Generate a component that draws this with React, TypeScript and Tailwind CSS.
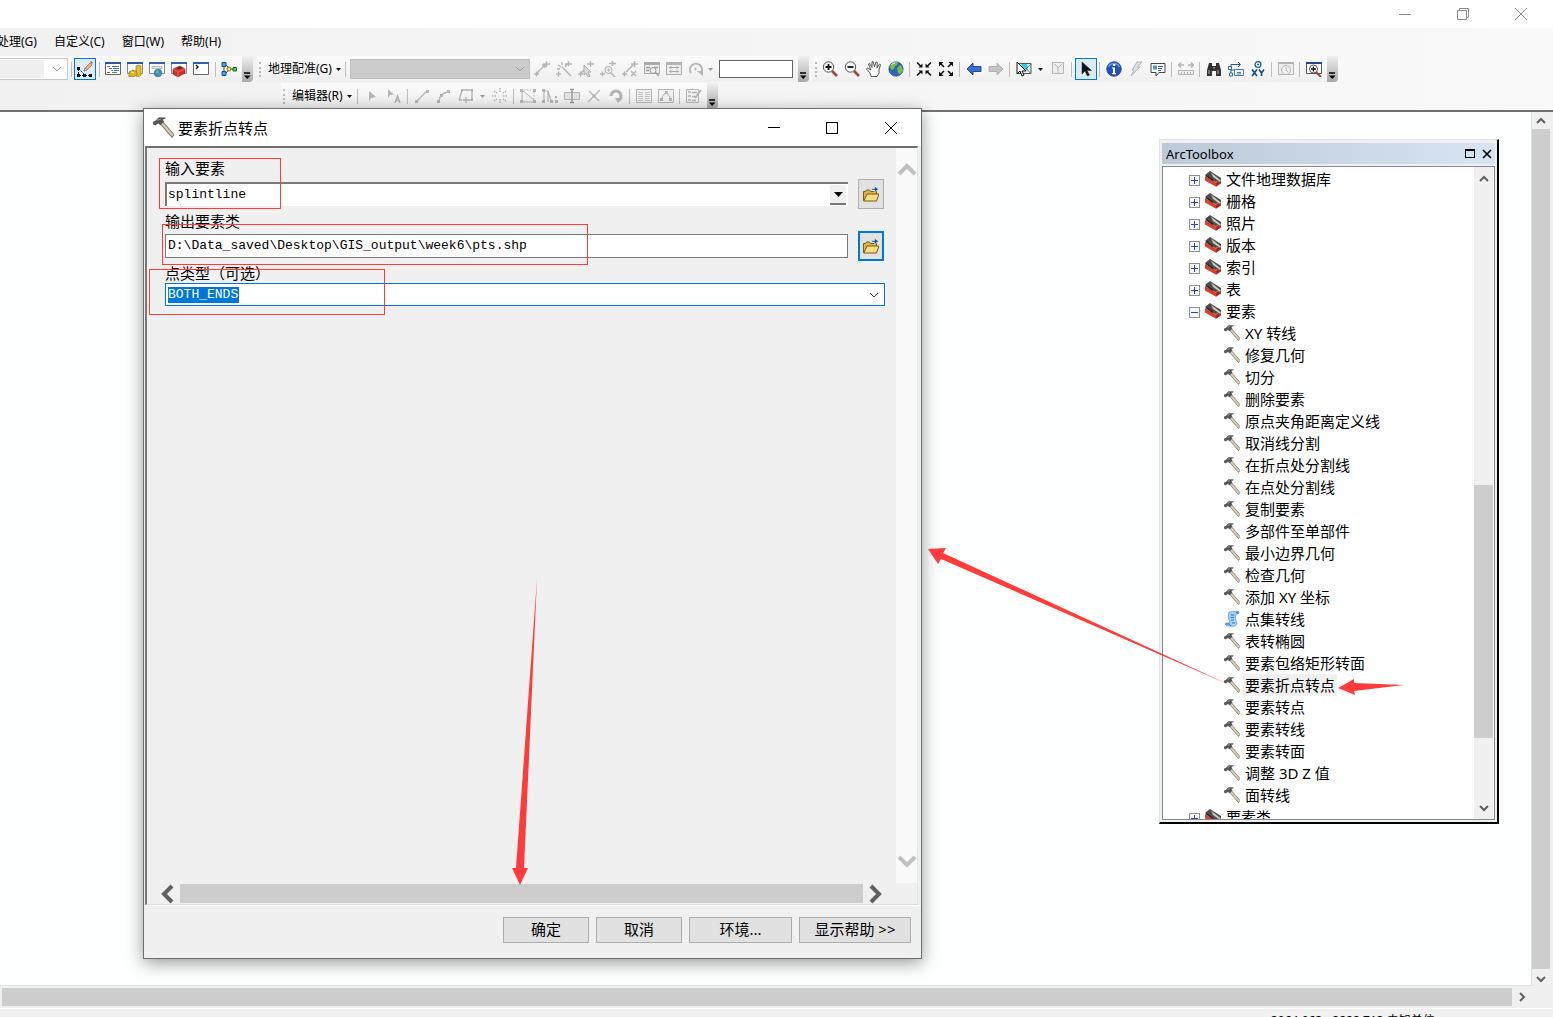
import { useState } from 'react';
import type { ReactNode } from 'react';
import clsx from 'clsx';

const G = '#b4b4b4';

// 16x16 toolbar drawings
const ICONS: Record<string, ReactNode> = {
  edit: (
    <>
      <path d="M1.500 8v6M2 14.500h12M2 8l5 5" stroke="#222" fill="none" strokeDasharray="2 1" />
      <path d="M0 6h3v3H0zM0 13h3v3H0zM6 13h3v3H6zM12 13h3v3h-3z" fill="#111" />
      <path d="M7 10l1-3 5-5 2 2-5 5z" fill="#f0b070" stroke="#8a5a30" strokeWidth=".6" />
      <path d="M13 1l1-1 2 2-1 1z" fill="#d0505a" />
      <path d="M7 10l1-3 2 2z" fill="#fff" stroke="#555" strokeWidth=".5" />
    </>
  ),
  toc: (
    <>
      <path d="M.5 1.500h15v12H.5z" fill="#fff" stroke="#666" />
      <path d="M0 1h16v2H0z" fill="#2f55a5" />
      <path d="M2 5.500h3M7 5.500h7M8 7.500h6M9 9.500h5" stroke="#3a7fd0" />
      <path d="M4 7.500h3M2 11.500h3" stroke="#d04040" />
      <path d="M6 9.500h2M7 11.500h5" stroke="#3aa060" />
    </>
  ),
  catalog: (
    <>
      <path d="M.5 1.500h15v11H.5z" fill="#fff" stroke="#888" />
      <path d="M0 1h16v2H0z" fill="#2f55a5" />
      <path d="M9 5l3-1 2 1v9l-3 2-2-1z" fill="#e2bf2b" stroke="#8f7612" strokeWidth=".7" />
      <path d="M2 11l4-2 4 2v3l-4 2H2z" fill="#d9b523" stroke="#8f7612" strokeWidth=".7" />
      <path d="M4 11l3 1" stroke="#fff3a0" />
    </>
  ),
  search: (
    <>
      <path d="M.5 1.500h15v11H.5z" fill="#fff" stroke="#888" />
      <path d="M0 1h16v2H0z" fill="#3560ad" />
      <path d="M3 5.500h10v2H3z" fill="#dde6f0" stroke="#9aa8b8" strokeWidth=".7" />
      <circle cx="9" cy="12" r="3.800" fill="#3d86d6" stroke="#27598f" strokeWidth=".6" />
      <path d="M7 10l2-1 1 2-1 2-2-1zM10 13l2-1-1 3z" fill="#72bf4a" />
    </>
  ),
  toolbox: (
    <>
      <path d="M.5 1.500h15v11H.5z" fill="#fff" stroke="#888" />
      <path d="M0 1h16v2H0z" fill="#3560ad" />
      <path d="M2 8l7-3 5 3v4l-7 4-5-3z" fill="#c8342c" stroke="#7d1a16" strokeWidth=".6" />
      <path d="M2 8l5 3 7-3M7 11v5" stroke="#ef8278" strokeWidth=".7" fill="none" />
      <path d="M6 7l3-1 2 1-3 1z" fill="#551512" />
    </>
  ),
  python: (
    <>
      <path d="M.5 1.500h15v12H.5z" fill="#fff" stroke="#666" />
      <path d="M0 1h16v2H0z" fill="#3560ad" />
      <path d="M3 4l2 2-2 2" stroke="#111" fill="none" strokeWidth="1.300" />
    </>
  ),
  model: (
    <>
      <path d="M3 3v10M5 4l3 3M5 12l3-3M9 8h3" stroke="#444" fill="none" />
      <path d="M1 1.500h4v4H1zM1 10.500h4v4H1z" fill="#4f9fe8" stroke="#15558f" />
      <circle cx="8" cy="8" r="2" fill="#ffe650" stroke="#8a7410" />
      <path d="M12 6.500h3.500v3.500H12z" fill="#58c06a" stroke="#1a7030" />
    </>
  ),
  ctrlPoint: <path d="M0 13h5M2.500 10.500v5M3 12l9-9M9 3h7M12.500 0v6M11 7V4H8" stroke={G} fill="none" strokeWidth="1.300" />,
  wand: <path d="M0 13h5M2.500 10.500v5M6 6l9 9M9 3h7M12.500 0v5M2 4l3 2M6 1v3M1 8h3M9 6l2-3" stroke={G} fill="none" strokeWidth="1.400" />,
  pick: (
    <>
      <path d="M0 13h5M2.500 10.500v5M9 3h7M12.500 0v6M3 12l3-3" stroke={G} fill="none" strokeWidth="1.300" />
      <path d="M6 4v10l2-2 2 4 2-1-2-4h3z" fill="#ddd" stroke="#aaa" />
    </>
  ),
  zoomPt: (
    <>
      <path d="M0 13h5M2.500 10.500v5M9 2.500h7M12.500 0v5M11 12l4 4" stroke={G} fill="none" strokeWidth="1.400" />
      <circle cx="8.500" cy="9" r="3.500" fill="#f3f3f3" stroke="#aaa" />
      <path d="M7 9h3M8.500 7.500v3" stroke="#aaa" />
    </>
  ),
  delPt: <path d="M0 13h5M2.500 10.500v5M4 11l7-7M9 3h7M12.500 0v6M9 10l5 5M14 10l-5 5" stroke={G} fill="none" strokeWidth="1.500" />,
  winZoom: (
    <>
      <path d="M.5 1.500h15v11H.5z" fill="#eee" stroke="#aaa" />
      <path d="M0 1h16v3H0z" fill="#aaa" />
      <path d="M2 6.500h4M10 6.500h4M2 9.500h3M11 11l4 4" stroke="#999" strokeWidth="1.400" />
      <circle cx="9" cy="9.500" r="3" fill="#eee" stroke="#999" />
    </>
  ),
  winTable: (
    <>
      <path d="M.5 1.500h15v12H.5z" fill="#eee" stroke="#aaa" />
      <path d="M0 1h16v3H0z" fill="#b4b4b4" />
      <path d="M3 6.500h10M3 10.500h10M5 5v3M11 5v3M5 9v3M11 9v3" stroke="#aaa" />
    </>
  ),
  rotate: (
    <>
      <path d="M3 12A6 6 0 1 1 13 12" stroke={G} fill="none" strokeWidth="2" />
      <path d="M9 10h6v5z" fill={G} />
      <path d="M6 8h3M7.500 6.500v3" stroke={G} />
    </>
  ),
  zoomIn: (
    <>
      <path d="M10 10l5 5" stroke="#9b4a3c" strokeWidth="2.600" />
      <circle cx="6.500" cy="6" r="5.200" fill="#f4f6f8" stroke="#555" />
      <path d="M3.500 6h6M6.500 3v6" stroke="#111" strokeWidth="1.800" />
    </>
  ),
  zoomOut: (
    <>
      <path d="M10 10l5 5" stroke="#9b4a3c" strokeWidth="2.600" />
      <circle cx="6.500" cy="6" r="5.200" fill="#f4f6f8" stroke="#555" />
      <path d="M3.500 6h6" stroke="#111" strokeWidth="1.800" />
    </>
  ),
  pan: <path d="M5 15.500L4 12 .5 8l1-1L5 9 2.500 3l1-.8L6 6.500 6 .8h1.300L8.500 6l1.500-5 1.200.3L11 7l2.500-4 1 .6L13 9v3l-2 3.500z" fill="#fff" stroke="#444" strokeWidth=".9" />,
  globe: (
    <>
      <circle cx="8" cy="8" r="7.200" fill="#2c66b4" stroke="#1d3f70" strokeWidth=".6" />
      <path d="M2 5l4-4 4 0-1 3-2 1-1 3-3 1zM9 7l3-3 2 2 1 4-3 3-2-1z" fill="#7dbb4c" />
      <path d="M3 4a6 6 0 0 1 4-2" stroke="#d5e9ff" fill="none" />
    </>
  ),
  shrink: (
    <>
      <path d="M1 1.500l4 4M15 1.500l-4 4M1 14.500l4-4M15 14.500l-4-4" stroke="#111" strokeWidth="1.600" />
      <path d="M6.500 2.500v4H2.500zM9.500 2.500v4h4zM6.500 13.500v-4h-4zM9.500 13.500v-4h4z" fill="#111" />
    </>
  ),
  expand: (
    <>
      <path d="M2 2l4 4M14 2l-4 4M2 14l4-4M14 14l-4-4" stroke="#111" strokeWidth="1.600" />
      <path d="M1 1h4.500L1 5.500zM15 1h-4.500L15 5.500zM1 15h4.500L1 10.500zM15 15h-4.500l4.500-4.500z" fill="#111" />
    </>
  ),
  back: <path d="M1 8l6-6v3.500h8v5H7V14z" fill="#3a6fd0" stroke="#1c3f8c" strokeWidth=".9" />,
  forward: <path d="M15 8L9 2v3.500H1v5h8V14z" fill="#c4c4c4" stroke="#adadad" strokeWidth=".9" />,
  selectFeat: (
    <>
      <path d="M2 2.500h13v10H2z" fill="#eaf6fa" stroke="#555" />
      <path d="M5 3h6l1 4-1 3-5-4z" fill="#30cbe8" />
      <path d="M10 7l4 5M11 7l4-4" stroke="#555" strokeWidth=".8" />
      <path d="M1 1v12l3-3 2 5 2-1-2-4h4z" fill="#fff" stroke="#111" />
    </>
  ),
  clearSel: (
    <>
      <path d="M2.500 1.500h11v11h-11z" fill="#eee" stroke={G} />
      <path d="M5 3l3 4 4-4M8 7v5" stroke={G} fill="none" />
    </>
  ),
  arrow: <path d="M4 1v12l3-3 2.500 5 2-1L9 9.500h4.500z" fill="#111" stroke="#333" strokeWidth=".6" />,
  info: (
    <>
      <circle cx="8" cy="8" r="7.300" fill="#2054b4" stroke="#173a78" strokeWidth=".7" />
      <path d="M2.500 6a6 6 0 0 1 11 0" stroke="#6e9cea" fill="none" strokeWidth="1.500" />
      <path d="M7 3h2.300v2H7zM6 6.500h3V12h1v1.200H6V12h1V7.500H6z" fill="#fff" />
    </>
  ),
  bolt: <path d="M9 1h5L9.500 6H12L3 15l3-6H4z" fill="#ddd" stroke={G} />,
  popup: (
    <>
      <path d="M1 2.500h14v9H9L6 15v-3.500H1z" fill="#fff" stroke="#444" />
      <path d="M3 4.500h4v4H3z" fill="#4a91d8" />
      <path d="M8 5.500h5M8 7.500h4M8 9.500h3" stroke="#2b6cb3" />
    </>
  ),
  measure: (
    <>
      <path d="M0 4h6M10 4h6M3 1.500L.5 4 3 6.500M13 1.500L15.500 4 13 6.500" stroke={G} fill="none" strokeWidth="1.500" />
      <path d="M.5 9.500h15v4H.5z" fill="#ececec" stroke={G} />
      <path d="M3.500 11v3M6.500 11v3M9.500 11v3M12.500 11v3" stroke={G} />
    </>
  ),
  find: (
    <>
      <path d="M3 2h3v3h4V2h3l2 7v6h-5v-5H6v5H1V9z" fill="#333" />
      <path d="M3 9v4M12 9v4M8 6v2" stroke="#999" strokeWidth="1.200" />
    </>
  ),
  route: (
    <>
      <path d="M3 7V3.500h9M10 1l2.500 2.500L10 6M3 7v5M3 9h4" stroke="#20588c" fill="none" />
      <path d="M.5 5.500h3v3h-3zM1.500 12h3v3h-3z" fill="#fff" stroke="#2a6ba6" />
      <path d="M6.500 8.500h9v6h-9z" fill="#eef5fb" stroke="#4c7ba6" />
      <path d="M9 11.500h4M9 13h4" stroke="#4c7ba6" />
    </>
  ),
  goXY: (
    <>
      <circle cx="8" cy="3.500" r="2.900" fill="#fff" stroke="#1c6298" strokeWidth="1.300" />
      <circle cx="8" cy="3.500" r="1" fill="#1c6298" />
      <path d="M2 8.500l5 6.500M7 8.500L2 15M9 8.500l2.500 3.500L14 8.500M11.500 12v3" stroke="#144f80" fill="none" strokeWidth="1.600" />
    </>
  ),
  time: (
    <>
      <path d="M.5 1.500h15v12H.5z" fill="#eee" stroke={G} />
      <path d="M0 1h16v2H0z" fill={G} />
      <circle cx="8" cy="9" r="4.500" fill="#f2f2f2" stroke={G} />
      <path d="M8 6v3l2 2" stroke={G} fill="none" />
    </>
  ),
  viewer: (
    <>
      <path d="M.5 1.500h15v11H.5z" fill="#fff" stroke="#555" />
      <path d="M0 1h16v2H0z" fill="#24468c" />
      <path d="M10 11l5 5" stroke="#9b4a3c" strokeWidth="2.200" />
      <circle cx="7.500" cy="8" r="4" fill="#fff" stroke="#555" />
      <path d="M5 8h5M7.500 5.500v5" stroke="#111" strokeWidth="1.400" />
    </>
  ),
  play: <path d="M5 3v10l2-3 5-1z" fill={G} />,
  playA: (
    <>
      <path d="M2 1v9l2-3h4z" fill={G} />
      <path d="M9 15l2.500-7L14 15M10 12.500h3" stroke={G} fill="none" strokeWidth="1.500" />
    </>
  ),
  segment: (
    <>
      <path d="M3 13L13 3" stroke={G} strokeWidth="1.300" />
      <path d="M1 12h3v3H1zM12 2h3v3h-3z" fill={G} />
    </>
  ),
  arc: (
    <>
      <path d="M3 13Q4 5 12 4" stroke={G} fill="none" strokeWidth="1.300" />
      <path d="M1 12h3v3H1zM4 6h3v3H4zM11 2h3v3h-3z" fill={G} />
    </>
  ),
  trace: (
    <>
      <path d="M1 12L4 2h10v10h-3M1 12h3M5 12h6M8 9v6" stroke={G} fill="none" strokeWidth="1.300" />
      <path d="M3 1h2v3H3zM13 1h2v3h-2zM13 10h2v3h-2z" fill={G} />
    </>
  ),
  burst: <path d="M8 0v5M8 11v5M0 8h5M11 8h5M2 3l3 2M14 3l-3 2M2 13l3-2M14 13l-3-2" stroke={G} strokeWidth="1.600" strokeDasharray="1.500 1" />,
  vertices: (
    <>
      <path d="M2 2v12h12M2 2l12 10" stroke={G} fill="none" />
      <path d="M4 2h10v9" stroke={G} fill="none" strokeDasharray="1.500 1.500" />
      <path d="M0 1h3v3H0zM13 1h3v3h-3zM0 12h3v3H0zM13 12h3v3h-3z" fill={G} />
    </>
  ),
  reshape: (
    <>
      <path d="M2 2v12M3 3h3l3 10M6 3v11" stroke={G} fill="none" strokeWidth="1.200" />
      <path d="M0 1h3v3H0zM0 12h3v3H0zM8 12h3v3H8zM13 8h2v2h-2zM13 12h3v3h-3z" fill={G} />
    </>
  ),
  cut: (
    <>
      <path d="M.5 4.500h15v7H.5z" fill="#e4e4e4" stroke={G} />
      <path d="M8 1v14M6 1.500h4M6 14.500h4" stroke="#999" strokeWidth="1.400" />
    </>
  ),
  split: (
    <>
      <path d="M2 14L14 2M3 3l10 10" stroke={G} strokeWidth="1.100" />
      <path d="M6.500 6.500h3v3h-3z" fill={G} />
    </>
  ),
  undoRotate: (
    <>
      <path d="M3 8a5 5 0 1 1 8 4" stroke={G} fill="none" strokeWidth="3" />
      <path d="M7 10h8l-5 5z" fill={G} />
    </>
  ),
  attrs: (
    <>
      <path d="M.5 1.500h15v13H.5z" fill="#f2f2f2" stroke={G} />
      <path d="M2 4.500h5M9 4.500h5M2 6.500h5M9 6.500h5M2 8.500h5M9 8.500h5M2 10.500h5M9 10.500h5M2 12.500h5M9 12.500h5" stroke="#c4c4c4" />
    </>
  ),
  sketch: (
    <>
      <path d="M.5 1.500h15v13H.5z" fill="#f2f2f2" stroke={G} />
      <path d="M4 12V9l4-5 4 5v3" stroke={G} fill="none" />
      <path d="M7 3h3v3H7zM2 10h3v3H2zM11 10h3v3h-3z" fill={G} />
    </>
  ),
  create: (
    <>
      <path d="M.5 1.500h12v13H.5z" fill="#f2f2f2" stroke={G} />
      <path d="M2 4h3M2 8h3M2 12h3M6 4.500h5M6 8.500h3M6 12.500h4" stroke={G} strokeWidth="1.500" />
      <path d="M9 10l6-8" stroke={G} strokeWidth="2" />
    </>
  ),
};

function Icon({ name }: { name: string }) {
  return (
    <svg viewBox="0 0 16 16" className="size-4 shrink-0" aria-hidden="true">
      {ICONS[name]}
    </svg>
  );
}

function Tool({ name, active }: { name: string; active?: boolean }) {
  return (
    <button
      aria-label={name}
      className={clsx(
        'flex size-[22px] shrink-0 items-center justify-center',
        active && 'border border-[#0078d7] bg-[#dcebf8]',
      )}
    >
      <Icon name={name} />
    </button>
  );
}

const Tools = ({ names }: { names: string[] }) => names.map((n) => <Tool key={n} name={n} />);

const Sep = () => (
  <div className="flex w-[6px] shrink-0 justify-center">
    <div className="h-[15px] w-px bg-[#bdbdbd]" />
  </div>
);

const Grip = () => <div className="mx-[2px] h-[15px] w-0 shrink-0 border-l-2 border-dotted border-[#b8b8b8]" />;

const Caret = ({ muted }: { muted?: boolean }) => (
  <svg viewBox="0 0 5 3" className="h-[3px] w-[5px] shrink-0" aria-hidden="true">
    <path d="M0 0h5L2.500 3z" fill={muted ? '#999' : '#111'} />
  </svg>
);

// overflow cap at the right end of every toolbar
const Cap = () => (
  <button
    aria-label="Toolbar options"
    className="ml-[2px] flex w-[11px] shrink-0 items-end justify-center self-stretch rounded-br-sm bg-linear-to-b from-[#f0f0f0] to-[#a8a8a8] pb-[3px]"
  >
    <svg viewBox="0 0 7 7" className="size-[7px]" aria-hidden="true">
      <path d="M0 1h6" stroke="#000" strokeWidth="1.500" />
      <path d="M0 3.500h6.500L3.250 7z" fill="#000" />
    </svg>
  </button>
);

type Dir = 'up' | 'down' | 'left' | 'right';

const CHEVRONS: Record<Dir, string> = {
  up: 'M1 7l4-4 4 4',
  down: 'M1 3l4 4 4-4',
  left: 'M7 1L3 5l4 4',
  right: 'M3 1l4 4-4 4',
};

function Chevron({ dir, className, width = 2 }: { dir: Dir; className?: string; width?: number }) {
  return (
    <svg viewBox="0 0 10 10" className={clsx('shrink-0', className)} aria-hidden="true">
      <path d={CHEVRONS[dir]} fill="none" stroke="currentColor" strokeWidth={width} />
    </svg>
  );
}

const HammerIcon = ({ className }: { className: string }) => (
  <svg viewBox="0 0 16 16" className={clsx('shrink-0', className)} aria-hidden="true">
    <path d="M5 4.500l2-1.500 9 10.500-1.500 2z" fill="#d8ceb8" stroke="#837864" strokeWidth=".8" />
    <path d="M0 4l2-1 2.500-2.500 5 .2L7 2l1.200 1.500L5.500 6 4 4.500 2 6 .5 5.800z" fill="#555" stroke="#333" strokeWidth=".4" />
    <path d="M3.500 2.500l2.500-1" stroke="#aaa" strokeWidth=".7" />
  </svg>
);

const ToolsetIcon = () => (
  <svg viewBox="0 0 16 16" className="size-4 shrink-0" aria-hidden="true">
    <path d="M0 4l5-4 11 7v3l-6 1z" fill="#4c4a4a" />
    <path d="M0 5l11 6.500v4.300L0 9.500z" fill="#d8402e" />
    <path d="M11 11.500l5-3v4l-5 3.300z" fill="#a52a1e" />
    <path d="M6 1.500l10 8-1 1.500-7-5z" fill="#d6d2c8" stroke="#77736c" strokeWidth=".5" />
    <path d="M1 4.500l7 5" stroke="#222" strokeWidth="1.500" />
  </svg>
);

const ScriptIcon = () => (
  <svg viewBox="0 0 16 16" className="size-4 shrink-0" aria-hidden="true">
    <path d="M5 1l9-1q2 1 0 3h-2q-2 5 1 9-1 4-5 3H3q-3-1-1-3h4Q3 6 5 1z" fill="#a9d3f7" stroke="#4a90d0" strokeWidth=".7" />
    <path d="M6.500 4h4M6.500 6.500h3.500M7 9h3M8 12h3" stroke="#2f74b8" />
    <path d="M12 1.500q2-1 2 1M2 13q3-1 5 2" stroke="#1d66b4" fill="none" />
  </svg>
);

const FolderIcon = () => (
  <svg viewBox="0 0 16 16" className="size-4" aria-hidden="true">
    <path d="M.5 15V5.500h2l1-1.500h3l1 1.500h6V8" fill="#d9b44c" stroke="#7a5c12" />
    <path d="M.8 15L4 8h12l-2.500 7z" fill="#f7dd84" stroke="#7a5c12" />
    <path d="M8.500 4V2.500h3V.2l4 3-4 3V4z" fill="#14508f" stroke="#fff" strokeWidth=".5" />
  </svg>
);

const TOOLSETS = ['文件地理数据库', '栅格', '照片', '版本', '索引', '表', '要素'];

const TOOLS = [
  'XY 转线', '修复几何', '切分', '删除要素', '原点夹角距离定义线', '取消线分割', '在折点处分割线',
  '在点处分割线', '复制要素', '多部件至单部件', '最小边界几何', '检查几何', '添加 XY 坐标', '点集转线',
  '表转椭圆', '要素包络矩形转面', '要素折点转点', '要素转点', '要素转线', '要素转面', '调整 3D Z 值', '面转线',
];

function ToolsetRow({ label, open }: { label: string; open?: boolean }) {
  return (
    <li className="flex h-[22px] items-center pl-[26px]">
      <button
        aria-label={open ? 'Collapse' : 'Expand'}
        className="mt-[2px] mr-[5px] flex size-[11px] shrink-0 border border-[#919191] bg-[#f7f7f7] text-[#2c4b9c]"
      >
        <svg viewBox="0 0 9 9" className="size-[9px]" aria-hidden="true">
          <path d={open ? 'M1 4.500h7' : 'M1 4.500h7M4.500 1v7'} stroke="currentColor" />
        </svg>
      </button>
      <ToolsetIcon />
      <span className="ml-[5px]">{label}</span>
    </li>
  );
}

function ArcToolbox() {
  const [selected, setSelected] = useState('要素折点转点');
  return (
    <section className="absolute top-[139px] left-[1159px] flex h-[685px] w-[340px] flex-col border-t border-r-2 border-b-2 border-l border-t-[#e3e3e3] border-r-black border-b-black border-l-[#e3e3e3] bg-[#f0f0f0] p-[2px] pt-[3px]">
      <header className="flex h-[21px] shrink-0 items-center bg-linear-to-r from-[#bccad8] to-[#d7e4f2] pr-[3px] pl-1">
        <h2 className="flex-1 text-[13px] leading-4">ArcToolbox</h2>
        <button aria-label="Maximize" className="mr-[7px] h-[9px] w-[10px] border border-t-2 border-black" />
        <button aria-label="Close">
          <svg viewBox="0 0 10 10" className="size-[10px]" aria-hidden="true">
            <path d="M1 1l8 8M9 1L1 9" stroke="#000" strokeWidth="1.600" />
          </svg>
        </button>
      </header>
      <div className="mt-[2px] flex min-h-0 flex-1 border border-[#828790] bg-white">
        <ul className="min-w-0 flex-1 overflow-hidden pt-px text-[15px] leading-[22px] whitespace-nowrap">
          {TOOLSETS.map((t) => (
            <ToolsetRow key={t} label={t} open={t === '要素'} />
          ))}
          {TOOLS.map((t) => (
            <li key={t} className="flex h-[22px] items-center pl-[61px]">
              {t === '点集转线' ? <ScriptIcon /> : <HammerIcon className="size-4" />}
              <button
                onClick={() => setSelected(t)}
                className={clsx('ml-[3px] h-[22px] px-[2px]', t === selected && 'bg-[#f0f0f0]')}
              >
                {t}
              </button>
            </li>
          ))}
          <ToolsetRow label="要素类" />
        </ul>
        <div className="mr-px flex w-[19px] flex-col items-center bg-[#f0f0f0] text-[#606060]">
          <Chevron dir="up" className="mt-[7px] size-[10px]" />
          <div className="mt-[301px] h-[253px] w-full bg-[#cdcdcd]" />
          <Chevron dir="down" className="mt-auto mb-[6px] size-[10px]" />
        </div>
      </div>
    </section>
  );
}

function Browse({ active }: { active?: boolean }) {
  return (
    <button
      aria-label="Browse"
      className={clsx(
        'ml-[10px] flex h-[30px] w-[26px] shrink-0 items-center justify-center bg-[#e1e1e1]',
        active ? 'border-2 border-[#0078d7]' : 'border border-[#adadad]',
      )}
    >
      <FolderIcon />
    </button>
  );
}

const BUTTONS = [
  { label: '确定', cls: 'w-[86px]' },
  { label: '取消', cls: 'w-[86px]' },
  { label: '环境...', cls: 'w-[103px]' },
  { label: '显示帮助 >>', cls: 'w-[112px]' },
];

const mono = "font-['Liberation_Mono','Noto_Sans_CJK_SC',monospace] text-[13px]";

function ToolDialog() {
  const [output, setOutput] = useState('D:\\Data_saved\\Desktop\\GIS_output\\week6\\pts.shp');
  return (
    <section className="absolute top-[108px] left-[143px] flex h-[851px] w-[779px] flex-col border border-[#6b6e6b] bg-[#f0f0f0] shadow-[0_4px_16px_rgba(0,0,0,0.4)]">
      <header className="flex h-[37px] shrink-0 items-center bg-white pl-[9px]">
        <HammerIcon className="size-[21px]" />
        <h1 className="ml-1 flex-1 text-[15px] leading-5">要素折点转点</h1>
        <button aria-label="Minimize" className="flex w-[58px] justify-center">
          <span className="h-px w-3 bg-black" />
        </button>
        <button aria-label="Maximize" className="flex w-[58px] justify-center">
          <span className="size-3 border border-black" />
        </button>
        <button aria-label="Close" className="flex w-[60px] justify-center">
          <svg viewBox="0 0 12 12" className="size-3" aria-hidden="true">
            <path d="M0 0l12 12M12 0L0 12" stroke="#000" />
          </svg>
        </button>
      </header>

      <div className="mr-[3px] ml-px flex min-h-0 flex-1 flex-col border-t-2 border-r border-b border-l-2 border-t-[#6f6f6f] border-r-[#e3e3e3] border-b-[#dcdcdc] border-l-[#777]">
        <div className="flex min-h-0 flex-1">
          <div className="min-w-0 flex-1 pr-[11px] pl-[18px] text-[15px] leading-5">
            <label htmlFor="in-features" className="mt-[10px] block">输入要素</label>
            <div className="mt-px flex h-[30px] items-center pr-px">
              <div className="flex h-6 flex-1 items-center border-t-2 border-l-2 border-[#7a7a7a] bg-white">
                <select id="in-features" className={clsx('h-5 flex-1 appearance-none bg-white pb-[2px] pl-px outline-none', mono)}>
                  <option>splintline</option>
                </select>
                <span className="mr-[2px] flex h-5 w-4 items-center justify-center border-b-2 border-[#777] bg-[#f0f0f0]">
                  <svg viewBox="0 0 9 5" className="h-[5px] w-[9px]" aria-hidden="true">
                    <path d="M0 0h9L4.500 5z" />
                  </svg>
                </span>
              </div>
              <Browse />
            </div>
            <label htmlFor="out-features" className="mt-[2px] block">输出要素类</label>
            <div className="flex h-[30px] items-center pr-px">
              <input
                id="out-features"
                value={output}
                onChange={(e) => setOutput(e.target.value)}
                className={clsx('h-6 min-w-0 flex-1 border border-[#7a7a7a] bg-white px-[2px] pb-[2px] outline-none', mono)}
              />
              <Browse active />
            </div>
            <label htmlFor="point-type" className="mt-[2px] block">点类型（可选）</label>
            <div className="flex h-[23px] items-center border border-[#0078d7] bg-white pr-[5px] pl-[2px]">
              <select id="point-type" className={clsx('h-4 appearance-none bg-[#0078d7] leading-4 text-white outline-none', mono)}>
                <option>BOTH_ENDS</option>
              </select>
              <Chevron dir="down" className="ml-auto size-[10px] text-[#444]" width={1} />
            </div>
          </div>
          <div className="flex w-[21px] shrink-0 flex-col items-center justify-between bg-[#f9f9f9] py-3 text-[#c0c0c0]">
            <Chevron dir="up" className="size-5" />
            <Chevron dir="down" className="size-5" />
          </div>
        </div>
        <div className="mr-[32px] flex h-[21px] shrink-0 items-center gap-[2px] pl-[11px] text-[#606060]">
          <Chevron dir="left" className="size-5" />
          <div className="h-[19px] flex-1 bg-[#cdcdcd]" />
          <Chevron dir="right" className="size-5" />
        </div>
      </div>

      <footer className="flex h-[53px] shrink-0 items-start justify-end gap-[7px] border-t border-white pt-[11px] pr-[10px]">
        {BUTTONS.map((b) => (
          <button
            key={b.label}
            className={clsx('h-[26px] border border-[#adadad] bg-[#e1e1e1] pb-[2px] text-[15px] leading-5', b.cls)}
          >
            {b.label}
          </button>
        ))}
      </footer>

      {/* highlight boxes */}
      <div className="pointer-events-none absolute top-[49px] left-[15px] h-[51px] w-[122px] border border-[#ff3b3b]" />
      <div className="pointer-events-none absolute top-[115px] left-[18px] h-[41px] w-[426px] border border-[#ff3b3b]" />
      <div className="pointer-events-none absolute top-[160px] left-[5px] h-[46px] w-[236px] border border-[#ff3b3b]" />
    </section>
  );
}

const bar = 'flex h-[26px] shrink-0 items-center bg-linear-to-b from-[#fbfbfb] to-[#efefef]';

export default function App() {
  return (
    <div className="relative flex h-screen flex-col overflow-hidden bg-[#f0f0f0] font-['Noto_Sans','Noto_Sans_CJK_SC',sans-serif] text-black">
      <header className="flex h-7 shrink-0 items-center justify-end bg-white pr-[3px] text-[#8a8a8a]">
        <button aria-label="Minimize" className="flex w-[58px] justify-center">
          <span className="h-px w-3 bg-[#8a8a8a]" />
        </button>
        <button aria-label="Restore" className="flex w-[58px] justify-center">
          <svg viewBox="0 0 12 12" className="size-3" aria-hidden="true">
            <path d="M.5 2.500h9v9h-9zM2.500 2.500v-2h9v9h-2" fill="none" stroke="currentColor" />
          </svg>
        </button>
        <button aria-label="Close" className="flex w-[58px] justify-center">
          <svg viewBox="0 0 12 12" className="size-3" aria-hidden="true">
            <path d="M0 0l12 12M12 0L0 12" stroke="currentColor" />
          </svg>
        </button>
      </header>

      <div className="flex h-[84px] shrink-0 flex-col border-b-2 border-[#707070] bg-linear-to-r from-[#f1f1f1] to-[#f9f9f9] text-xs">
        <nav className="flex h-7 shrink-0 items-center gap-[17px] whitespace-nowrap">
          {/* first entry runs off the left edge */}
          <button className="-ml-[3px]">处理(G)</button>
          <button>自定义(C)</button>
          <button>窗口(W)</button>
          <button>帮助(H)</button>
        </nav>
        <div className="flex h-[26px] shrink-0">
          <div className={bar}>
            <div className="flex h-[22px] w-[68px] items-center justify-between border border-l-0 border-[#c8c8c8] bg-white pr-[5px]">
              <span className="h-[18px] w-11 bg-[#f0f0f0]" />
              <Chevron dir="down" className="size-[10px] text-[#aaa]" width={1} />
            </div>
            <Sep />
            <Tool name="edit" active />
            <Sep />
            <Tools names={['toc', 'catalog', 'search', 'toolbox', 'python']} />
            <Sep />
            <Tool name="model" />
            <Cap />
          </div>
          <div className={clsx(bar, 'ml-1')}>
            <Grip />
            <button className="ml-[5px] flex items-center gap-1 pr-[2px] whitespace-nowrap">地理配准(G) <Caret /></button>
            <Sep />
            <select aria-label="Raster layer" disabled className="mx-px h-5 w-[180px] appearance-none border border-[#bfbfbf] bg-[#cccccc]" />
            <Chevron dir="down" className="-ml-4 mr-[6px] size-[10px] text-[#999]" width={1} />
            <Tools names={['ctrlPoint', 'wand', 'pick', 'zoomPt', 'delPt', 'winZoom', 'winTable', 'rotate']} />
            <span className="flex w-2 justify-center"><Caret muted /></span>
            <input aria-label="Rotation" className="mr-[3px] ml-1 h-[18px] w-[74px] border border-[#646464] bg-white" />
            <Cap />
          </div>
          <div className={clsx(bar, 'ml-1')}>
            <Grip />
            <Tools names={['zoomIn', 'zoomOut', 'pan', 'globe']} />
            <Sep />
            <Tools names={['shrink', 'expand']} />
            <Sep />
            <Tools names={['back', 'forward']} />
            <Sep />
            <Tool name="selectFeat" />
            <span className="flex w-3 justify-center"><Caret /></span>
            <Tool name="clearSel" />
            <Sep />
            <Tool name="arrow" active />
            <Sep />
            <Tools names={['info', 'bolt', 'popup']} />
            <Sep />
            <Tool name="measure" />
            <Sep />
            <Tools names={['find', 'route', 'goXY']} />
            <Sep />
            <Tool name="time" />
            <Sep />
            <Tool name="viewer" />
            <Cap />
          </div>
        </div>
        <div className={clsx(bar, 'mt-px ml-[281px] self-start')}>
          <Grip />
          <button className="ml-[5px] flex items-center gap-1 pr-[3px] whitespace-nowrap">编辑器(R) <Caret /></button>
          <Sep />
          <Tools names={['play', 'playA']} />
          <Sep />
          <Tools names={['segment', 'arc', 'trace']} />
          <span className="flex w-3 justify-center"><Caret muted /></span>
          <Tool name="burst" />
          <Sep />
          <Tools names={['vertices', 'reshape', 'cut', 'split', 'undoRotate']} />
          <Sep />
          <Tools names={['attrs', 'sketch']} />
          <Sep />
          <Tool name="create" />
          <Cap />
        </div>
      </div>

      <main className="flex min-h-0 flex-1">
        <div className="flex-1 border-r border-b border-[#e0e0e0] bg-[#fdfffe]" />
        <div className="mr-[3px] flex w-[18px] flex-col items-center gap-[3px] bg-[#f0f0f0] pt-1 text-[#606060]">
          <Chevron dir="up" className="size-[10px]" />
          <div className="w-full flex-1 bg-[#cdcdcd]" />
          <Chevron dir="down" className="mt-[2px] mb-[2px] size-[10px]" />
        </div>
      </main>
      <div className="flex h-[22px] shrink-0 items-center pl-[2px] text-[#606060]">
        <div className="h-[18px] flex-1 bg-[#cdcdcd]" />
        <Chevron dir="right" className="mr-[26px] ml-[5px] size-[10px]" />
      </div>
      <footer className="flex h-[9px] shrink-0 justify-end overflow-hidden border-t border-white text-xs leading-4">
        <span className="w-[282px] pt-1 whitespace-nowrap">3064.963&nbsp; -2882.713 未知单位</span>
      </footer>

      <ToolDialog />
      <ArcToolbox />

      <svg className="pointer-events-none absolute inset-0 size-full" fill="#ff3b3b" aria-hidden="true">
        <path d="M928 549l18-1-3 5 289 133-291-127-3 5z" />
        <path d="M537 579l-13 289h4l-8 17-8-17h4z" />
        <path d="M1338 688l16-9v4l50 2-50 6 1 4z" />
      </svg>
    </div>
  );
}
